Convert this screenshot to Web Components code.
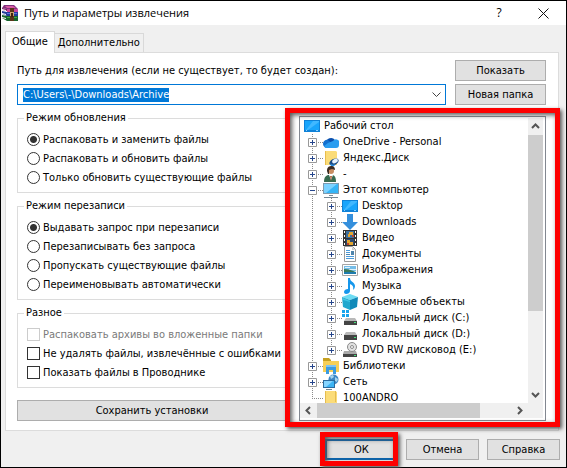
<!DOCTYPE html>
<html lang="ru">
<head>
<meta charset="utf-8">
<title>Путь и параметры извлечения</title>
<style>
  body {
    margin: 0;
    font: 11px/14px "DejaVu Sans Condensed", "Liberation Sans", sans-serif;
    color: #000;
  }
</style>
</head>
<body>
<extract-dialog></extract-dialog>

<script>
// Icons, 16x16 each
const ICONS = {
  desktop: `<path fill="#0f82d8" d="M0 2h16v12H0z"/><path fill="#19a5fb" d="M1 3h14v9H1z"/><path fill="#41b8ff" d="M9 3h6v1L4 12H2z"/><path fill="#8ed2ff" d="M2 12h1v1H2zM12 12h2v1h-2z"/>`,
  cloud: `<path fill="#0a4fae" d="M3 9a5 5 0 0 1 9-3l-4 5z"/><path fill="#1270cf" d="M0 10a4 4 0 0 1 5-4l7 6-8 2c-2 0-4-2-4-4z"/><path fill="#2a9df0" d="M5 9l5-2a3 3 0 0 1 6 4c0 2-1 3-3 3H4c-1 0-2 0-3-2z"/>`,
  yandex: `<path fill="#fbdc78" d="M2 1h11l1 1v13H2z"/><path fill="#e9bd4d" d="M2 1h1v14H2z"/><ellipse cx="11" cy="12" rx="5" ry="3" transform="rotate(-28 11 12)" fill="#1a4a86"/><ellipse cx="12" cy="11" rx="3" ry="2" transform="rotate(-28 12 11)" fill="#e8f3ff"/><path fill="#2c8fe0" d="M7 13c1 2 4 2 6 1l-2 2H8z"/>`,
  user: `<path fill="#376b50" d="M1 16c0-5 2-7 5-7h3c3 0 4 3 4 7z"/><path fill="#fff" d="M6 9h4l-2 5z"/><path fill="#b4633d" d="M7 10h2l-1 5z"/><circle cx="8" cy="5" r="3" fill="#c98d62"/><path fill="#3c2c22" d="M4 5c0-4 2-5 5-5 2 0 3 2 3 4L9 3 6 4v4L5 8z"/>`,
  computer: `<path fill="#7e9aae" d="M0 1h16v11H0z"/><path fill="#35b5f7" d="M1 2h14v9H1z"/><path fill="#7bd2ff" d="M1 2h13L3 11H1z"/><path fill="#fff" d="M7 12h2v2H7z"/><path fill="#768894" d="M6 13h4v1H6zM1 15h14v1H1z"/>`,
  download: `<path fill="#348fdc" d="M5 0h6v8h5l-8 8-8-8h5z"/>`,
  video: `<path fill="#333" d="M1 0h14v16H1z"/><path fill="#3b6e9d" d="M4 1h8v7H4z"/><path fill="#2c4b72" d="M4 9h8v6H4z"/><path fill="#e4a62f" d="M7 2h4v3H8v2H6V4h1zM5 10h3v2h3v3H7v-2H5z"/><path fill="#bd452d" d="M10 5h2v2h-2zM5 13h2v2H5z"/><path fill="#fff" d="M2 1h1v2H2zM2 5h1v2H2zM2 9h1v2H2zM2 13h1v2H2zM13 1h1v2h-1zM13 5h1v2h-1zM13 9h1v2h-1zM13 13h1v2h-1z"/>`,
  document: `<path fill="#fff" stroke="#9a9a9a" d="M2.5.5h8l3 3v12h-11z"/><path fill="#ccc" d="M10 1l3 3h-3z"/><path fill="#4b9ada" d="M4 4h4v1H4zM4 6h4v1H4zM4 10h8v1H4zM4 12h8v1H4z"/><path fill="#4e84ac" d="M9 5h3v4H9zM4 8h4v1H4z"/>`,
  picture: `<path fill="#fff" stroke="#a5a5a5" d="M.5 2.5h15v11H.5z"/><path fill="#75bde8" d="M2 4h12v5H2z"/><path fill="#dff3fb" d="M3 5h5v1H3zM7 7h7v1H7z"/><path fill="#3b7959" d="M2 7c4 0 7 1 12 3v1H2z"/><path fill="#1e7cae" d="M2 10h12v2H2z"/>`,
  music: `<path fill="#1697ec" d="M6 0h2c0 4 5 4 5 8 0 2-1 3-2 4 1-4-1-5-3-6v7c0 2-2 3-4 3-1 0-2-1-2-2 0-2 2-3 4-3z"/>`,
  cube: `<path fill="#6ddcf3" d="M8 0l8 3-8 3-8-3z"/><path fill="#22a8ce" d="M0 3l8 3v10l-7-3z"/><path fill="#118ab9" d="M16 3L8 6v10l7-3z"/><path fill="#3fc6e5" d="M1 4l7 3v1L1 6z"/>`,
  windisk: `<path fill="#18a4ec" d="M0 0h3v3H0zM4 0h3v3H4zM0 4h3v3H0zM4 4h3v3H4z"/><path fill="#b9b9b9" d="M4 8h9l2 3H2z"/><path fill="#444" d="M2 11h13v4H2z"/><path fill="#43e27b" d="M12 12h2v1h-2z"/>`,
  disk: `<path fill="#b9b9b9" d="M4 6h9l2 3H2z"/><path fill="#444" d="M2 9h13v5H2z"/><path fill="#43e27b" d="M12 11h2v1h-2z"/>`,
  dvd: `<path fill="#aaa" d="M2 9h12l1 3H1z"/><path fill="#444" d="M1 12h14v3H1z"/><circle cx="10" cy="5" r="4.5" fill="#e2e2e2" stroke="#8b8b8b"/><circle cx="10" cy="5" r="1.5" fill="#fff" stroke="#8b8b8b"/><path fill="#43e27b" d="M12 13h2v1h-2z"/>`,
  library: `<path fill="#c6a021" d="M0 0h6l2 2v3H0z"/><path fill="#f6cf57" d="M0 3h16v11H0z"/><path fill="#3b9be0" d="M3 7h10v9h-3v-4H6v4H3z"/><path fill="#7dc3f3" d="M3 7h10v2H3z"/>`,
  network: `<circle cx="10.5" cy="5.5" r="5" fill="#3c86c4"/><path fill="#a5d5ee" d="M7 2l3-1 1 2-3 2zM12 3l3 2-1 3-2-1z"/><path fill="#2a6b9e" d="M0 6h12v8H0z"/><path fill="#3cb4f4" d="M1 7h10v6H1z"/><path fill="#86d5ff" d="M1 7h9l-7 6H1z"/><path fill="#708490" d="M3 15h6v1H3z"/>`,
  folder: `<path fill="#fbdc78" d="M2 1h10l2 1v14H2z"/><path fill="#e5bd51" d="M2 1h1v15H2zM12 1h1v11h-1z"/>`,
  rar: `<path fill="#80307c" d="M2 0h10l4 4H5L0 3z"/><path fill="#d75aa4" d="M3 1h8l3 2H5z"/><path fill="#7a1762" d="M0 3l5 1v2L0 5z"/><path fill="#233c9a" d="M0 6l5 1h11v4H5L0 9z"/><path fill="#c8459a" d="M5 4h11v3H5z"/><path fill="#5975dd" d="M5 8h10v1H5z"/><path fill="#17642c" d="M0 10l5 1h11v5H5l-5-3z"/><path fill="#3eab49" d="M5 12h10v1H5z"/><path fill="#fff" d="M0 4l4 1v1L0 5zM0 8l4 1v1L0 9zM0 12l4 1v1l-4-1z"/><path fill="#5b3518" d="M8 3h4v13H8z"/><path fill="#caa46b" d="M8 7h4v4H8z"/><path fill="#40230e" d="M9 8h2v4H9z"/>`
};

// level, icon, label, branch state ('+' closed, '-' open, '' none)
const TREE = [
  [0, 'desktop', 'Рабочий стол', ''],
  [1, 'cloud', 'OneDrive - Personal', '+'],
  [1, 'yandex', 'Яндекс.Диск', '+'],
  [1, 'user', '-', '+'],
  [1, 'computer', 'Этот компьютер', '-'],
  [2, 'desktop', 'Desktop', '+'],
  [2, 'download', 'Downloads', '+'],
  [2, 'video', 'Видео', '+'],
  [2, 'document', 'Документы', '+'],
  [2, 'picture', 'Изображения', '+'],
  [2, 'music', 'Музыка', '+'],
  [2, 'cube', 'Объемные объекты', '+'],
  [2, 'windisk', 'Локальный диск (C:)', '+'],
  [2, 'disk', 'Локальный диск (D:)', '+'],
  [2, 'dvd', 'DVD RW дисковод (E:)', '+'],
  [1, 'library', 'Библиотеки', '+'],
  [1, 'network', 'Сеть', '+'],
  [1, 'folder', '100ANDRO', '']
];

class BaseElement extends HTMLElement {
  constructor() {
    super();
    this.attachShadow({ mode: 'open' });
  }

  connectedCallback() {
    this.shadowRoot.innerHTML = this.render();
  }
}

class UiIcon extends BaseElement {
  render() {
    return `
      <style>
        :host { display: block; flex: none; width: 16px; height: 16px; }
        svg { display: block; }
      </style>
      <svg width="16" height="16" viewBox="0 0 16 16" aria-hidden="true">${ICONS[this.getAttribute('name')]}</svg>
    `;
  }
}

class PushButton extends BaseElement {
  render() {
    return `
      <style>
        :host { display: block; }
        button {
          display: block;
          box-sizing: border-box;
          width: 100%;
          height: 21px;
          padding: 0;
          font: inherit;
          color: inherit;
          background: #e1e1e1;
          border: 1px solid #adadad;
        }
        :host([default]) button { border: 2px solid #0a64ad; }
      </style>
      <button type="button"><slot></slot></button>
    `;
  }
}

// Radio button or tick box with its label
class CheckOption extends BaseElement {
  render() {
    const type = this.getAttribute('type');
    const checked = this.hasAttribute('checked') ? 'checked' : '';
    const disabled = this.hasAttribute('disabled') ? 'disabled' : '';
    return `
      <style>
        :host { display: block; }
        label { display: flex; align-items: center; gap: 3px; height: 19px; white-space: nowrap; }
        input {
          appearance: none;
          flex: none;
          box-sizing: border-box;
          width: 13px;
          height: 13px;
          margin: 0;
          background: #fff;
          border: 1px solid #333;
        }
        input[type=radio] { border-radius: 50%; }
        input:checked { background: radial-gradient(circle, #333 3px, #fff 4px); }
        input:disabled { border-color: #ccc; }
        :host([disabled]) { color: #7a7a7a; }
      </style>
      <label><input type="${type}" ${checked} ${disabled}><slot></slot></label>
    `;
  }
}

class OptionGroup extends BaseElement {
  render() {
    return `
      <style>
        :host { display: block; }
        fieldset {
          min-width: 0;
          margin: 0;
          padding: 5px 9px;
          border: 1px solid #dcdcdc;
        }
        legend { height: 14px; margin-left: -3px; padding: 0 2px; }
      </style>
      <fieldset>
        <legend>${this.getAttribute('label')}</legend>
        <slot></slot>
      </fieldset>
    `;
  }
}

class PathBox extends BaseElement {
  render() {
    return `
      <style>
        :host {
          display: flex;
          box-sizing: border-box;
          height: 21px;
          background: #fff;
          border: 1px solid #0078d7;
        }
        input {
          flex: 1;
          min-width: 0;
          padding: 0 5px;
          font: inherit;
          border: 0;
          outline: 0;
          background: none;
        }
        input::selection { color: #fff; background: #0078d7; }
        button { width: 18px; padding: 0; border: 0; background: none; }
        svg { display: block; margin: auto; }
      </style>
      <input type="text" aria-label="Путь для извлечения" value="C:\\Users\\-\\Downloads\\Archive" spellcheck="false">
      <button type="button" aria-label="Открыть список">
        <svg width="9" height="6" viewBox="0 0 9 6"><path d="M.5.5l4 4 4-4" fill="none" stroke="#444"/></svg>
      </button>
    `;
  }

  connectedCallback() {
    super.connectedCallback();
    const input = this.shadowRoot.querySelector('input');
    input.focus();
    input.select();
  }
}

class ScrollStrip extends BaseElement {
  render() {
    const vertical = this.hasAttribute('vertical');
    const back = vertical ? 'M1 6l3.5-3.5L8 6' : 'M6 1L2.5 4.5 6 8';
    const forward = vertical ? 'M1 3l3.5 3.5L8 3' : 'M3 1l3.5 3.5L3 8';
    const arrow = (d, label) => `<button type="button" aria-label="${label}"><svg width="9" height="9" viewBox="0 0 9 9"><path d="${d}" fill="none" stroke="#555" stroke-width="2"/></svg></button>`;
    return `
      <style>
        :host { display: flex; background: #f0f0f0; }
        :host([vertical]) { flex-direction: column; }
        button {
          display: flex;
          align-items: center;
          justify-content: center;
          flex: 0 0 17px;
          padding: 0;
          border: 0;
          background: none;
        }
        .track { display: flex; flex: 1; flex-direction: inherit; }
        .thumb { flex: 0 0 ${this.getAttribute('size')}; background: #cdcdcd; }
      </style>
      ${arrow(back, 'Назад')}
      <div class="track"><div class="thumb"></div></div>
      ${arrow(forward, 'Вперёд')}
    `;
  }
}

class TreeRow extends BaseElement {
  render() {
    const level = +this.getAttribute('level');
    const state = this.getAttribute('state');
    const last = this.hasAttribute('last');
    const dots = 'stroke="#8a8a8a" stroke-dasharray="1 1"';
    let guides = '';
    for (let i = 1; i <= level; i++) {
      const own = i === level;
      const end = own && last ? 8 : 16;
      guides += `<svg width="19" height="16" viewBox="0 0 19 16" aria-hidden="true"><path d="M8.5 0V${end}" ${dots}/>`;
      if (own) {
        guides += `<path d="M8 8.5H19" ${dots}/>`;
        if (state) {
          guides += `<path d="M4.5 4.5h8v8h-8z" fill="#fff" stroke="#999"/><path d="M6 8.5h5${state === '+' ? 'M8.5 6v5' : ''}" stroke="#26468c"/>`;
        }
      }
      guides += '</svg>';
    }
    return `
      <style>
        :host { display: flex; height: 16px; line-height: 16px; white-space: nowrap; }
        svg { display: block; flex: none; }
        span { margin-left: 4px; }
      </style>
      ${guides}<ui-icon name="${this.getAttribute('icon')}"></ui-icon><span><slot></slot></span>
    `;
  }
}

class FolderTree extends BaseElement {
  render() {
    const rows = TREE.map(([level, icon, label, state], i) => {
      const last = i === TREE.length - 1 || TREE[i + 1][0] < level;
      return `<tree-row role="treeitem" level="${level}" icon="${icon}" state="${state}" ${last ? 'last' : ''}>${label}</tree-row>`;
    }).join('');
    return `
      <style>
        :host {
          display: grid;
          grid-template: minmax(0, 1fr) 15px / minmax(0, 1fr) 15px;
          box-sizing: border-box;
          padding: 1px 2px 2px 0;
          background: #fff;
          border: 1px solid #828790;
        }
        .view { contain: size; overflow: hidden; padding-left: 4px; }
        .corner { background: #f0f0f0; }
      </style>
      <div class="view" role="tree">${rows}</div>
      <scroll-strip vertical size="70%"></scroll-strip>
      <scroll-strip size="84%"></scroll-strip>
      <div class="corner"></div>
    `;
  }
}

// Red frame laid over its content, spreading out by --spread
class MarkFrame extends BaseElement {
  render() {
    return `
      <style>
        :host { display: grid; position: relative; }
        .frame {
          position: absolute;
          inset: var(--spread, -7px 0 -6px -5px);
          border: 5px solid #fe0000;
          box-shadow: 2px 2px 4px #555, inset 2px 2px 5px #555;
          pointer-events: none;
        }
      </style>
      <slot></slot>
      <div class="frame"></div>
    `;
  }
}

class TitleBar extends BaseElement {
  render() {
    return `
      <style>
        :host {
          display: flex;
          align-items: center;
          height: 24px;
          padding: 0 17px 0 1px;
          background: #fff;
          font-family: "Open Sans", "Noto Sans", sans-serif;
        }
        h1 { flex: 1; margin: 0 0 0 6px; font: inherit; }
        button { display: flex; justify-content: center; width: 12px; padding: 0; border: 0; background: none; font: inherit; font-size: 12px; }
        button + button { margin-left: 32px; }
        svg { flex: none; }
      </style>
      <ui-icon name="rar"></ui-icon>
      <h1><slot></slot></h1>
      <button type="button">?</button>
      <button type="button" aria-label="Закрыть">
        <svg width="11" height="11" viewBox="0 0 11 11"><path d="M.5.5l10 10M10.5.5l-10 10" stroke="#111"/></svg>
      </button>
    `;
  }
}

class TabStrip extends BaseElement {
  render() {
    return `
      <style>
        :host { display: flex; align-items: flex-end; }
        button {
          height: 19px;
          padding: 0 3px;
          font: inherit;
          color: inherit;
          background: #f0f0f0;
          border: 1px solid #d9d9d9;
          border-width: 1px 1px 0 0;
        }
        button[aria-selected=true] {
          height: 22px;
          margin-bottom: -1px;
          padding: 0 6px 2px;
          background: #fff;
          border-left-width: 1px;
          z-index: 1;
        }
      </style>
      <button type="button" role="tab" aria-selected="true">Общие</button>
      <button type="button" role="tab" aria-selected="false">Дополнительно</button>
    `;
  }
}

class ExtractDialog extends BaseElement {
  render() {
    return `
      <style>
        :host {
          display: flex;
          flex-direction: column;
          box-sizing: border-box;
          min-height: 100vh;
          background: #f0f0f0;
          border: 1px solid #000;
        }
        tab-strip { margin: 6px 7px 0 4px; }
        main {
          flex: 1;
          display: flex;
          flex-direction: column;
          gap: 6px;
          margin: 0 7px 0 4px;
          padding: 7px 12px 9px 11px;
          background: #fff;
          border: 1px solid #dcdcdc;
        }
        .path {
          display: grid;
          grid-template-columns: minmax(0, 1fr) 91px;
          gap: 3px 9px;
          align-items: center;
        }
        .body {
          flex: 1;
          display: grid;
          grid-template-columns: 270px minmax(0, 1fr);
          gap: 12px;
        }
        .options { display: flex; flex-direction: column; gap: 6px; }
        .options push-button { margin-top: 6px; }
        .body mark-frame { --spread: -8px -14px -6px -14px; margin-top: 5px; }
        footer { display: flex; justify-content: flex-end; gap: 8px; padding: 8px 6px 7px; }
        footer push-button { width: 73px; }
      </style>
      <title-bar>Путь и параметры извлечения</title-bar>
      <tab-strip role="tablist"></tab-strip>
      <main>
        <div class="path">
          <div>Путь для извлечения (если не существует, то будет создан):</div>
          <push-button>Показать</push-button>
          <path-box></path-box>
          <push-button>Новая папка</push-button>
        </div>
        <div class="body">
          <div class="options">
            <option-group label="Режим обновления">
              <check-option type="radio" checked>Распаковать и заменить файлы</check-option>
              <check-option type="radio">Распаковать и обновить файлы</check-option>
              <check-option type="radio">Только обновить существующие файлы</check-option>
            </option-group>
            <option-group label="Режим перезаписи">
              <check-option type="radio" checked>Выдавать запрос при перезаписи</check-option>
              <check-option type="radio">Перезаписывать без запроса</check-option>
              <check-option type="radio">Пропускать существующие файлы</check-option>
              <check-option type="radio">Переименовывать автоматически</check-option>
            </option-group>
            <option-group label="Разное">
              <check-option type="checkbox" disabled>Распаковать архивы во вложенные папки</check-option>
              <check-option type="checkbox">Не удалять файлы, извлечённые с ошибками</check-option>
              <check-option type="checkbox">Показать файлы в Проводнике</check-option>
            </option-group>
            <push-button>Сохранить установки</push-button>
          </div>
          <mark-frame><folder-tree></folder-tree></mark-frame>
        </div>
      </main>
      <footer>
        <mark-frame><push-button default>ОК</push-button></mark-frame>
        <push-button>Отмена</push-button>
        <push-button>Справка</push-button>
      </footer>
    `;
  }
}

customElements.define('ui-icon', UiIcon);
customElements.define('push-button', PushButton);
customElements.define('check-option', CheckOption);
customElements.define('option-group', OptionGroup);
customElements.define('path-box', PathBox);
customElements.define('scroll-strip', ScrollStrip);
customElements.define('tree-row', TreeRow);
customElements.define('folder-tree', FolderTree);
customElements.define('mark-frame', MarkFrame);
customElements.define('title-bar', TitleBar);
customElements.define('tab-strip', TabStrip);
customElements.define('extract-dialog', ExtractDialog);
</script>
</body>
</html>
